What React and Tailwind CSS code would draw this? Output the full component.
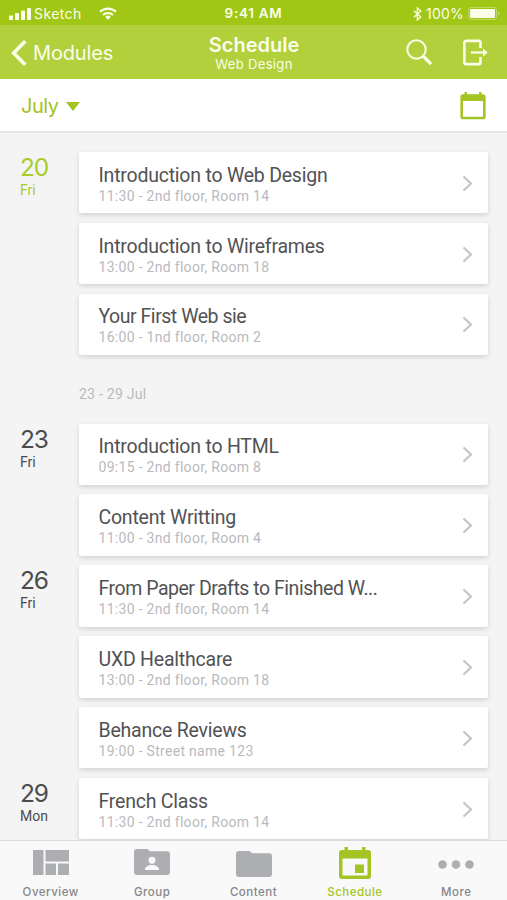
const weeks = [
  {
    label: null,
    days: [
      {
        date: '20',
        weekday: 'Fri',
        active: true,
        events: [
          { title: 'Introduction to Web Design', info: '11:30 - 2nd floor, Room 14' },
          { title: 'Introduction to Wireframes', info: '13:00 - 2nd floor, Room 18' },
          { title: 'Your First Web sie', info: '16:00 - 1nd floor, Room 2', tight: true },
        ],
      },
    ],
  },
  {
    label: '23 - 29 Jul',
    days: [
      {
        date: '23',
        weekday: 'Fri',
        events: [
          { title: 'Introduction to HTML', info: '09:15 - 2nd floor, Room 8' },
          { title: 'Content Writting', info: '11:00 - 3nd floor, Room 4' },
        ],
      },
      {
        date: '26',
        weekday: 'Fri',
        events: [
          { title: 'From Paper Drafts to Finished W...', info: '11:30 - 2nd floor, Room 14', tight: true },
          { title: 'UXD Healthcare', info: '13:00 - 2nd floor, Room 18' },
          { title: 'Behance Reviews', info: '19:00 - Street name 123' },
        ],
      },
      {
        date: '29',
        weekday: 'Mon',
        events: [{ title: 'French Class', info: '11:30 - 2nd floor, Room 14' }],
      },
    ],
  },
]

function StatusBar() {
  return (
    <div className="grid h-[25px] grid-cols-3 items-center bg-[#a1c716] px-[8px] pt-[2px] text-[13.5px] leading-none text-[#fbfde9]">
      <div className="flex items-center">
        <svg width="23" height="12" viewBox="0 0 23 12" fill="currentColor">
          <rect x="1" y="7.5" width="4" height="4.5" rx="0.8" />
          <rect x="7" y="5" width="4" height="7" rx="0.8" />
          <rect x="13" y="2.5" width="4" height="9.5" rx="0.8" />
          <rect x="19" y="0" width="4" height="12" rx="0.8" />
        </svg>
        <span className="ml-[3px] text-[14px] tracking-[0.4px]">Sketch</span>
        <svg className="ml-[17px]" width="18" height="13" viewBox="0 0 18 13" fill="none" stroke="currentColor" strokeWidth="2.2">
          <path d="M1 4.8a11.5 11.5 0 0 1 16 0" />
          <path d="M4 8a7.2 7.2 0 0 1 10 0" />
          <path d="M9 12.8 6.2 9.9a4 4 0 0 1 5.6 0z" fill="currentColor" stroke="none" />
        </svg>
      </div>
      <div className="text-center text-[13.5px] font-semibold tracking-[0.7px]">9:41 AM</div>
      <div className="-mr-[1px] flex items-center justify-end">
        <svg width="9" height="14" viewBox="0 0 9 14" fill="none" stroke="currentColor" strokeWidth="1.3">
          <path d="m.8 3.8 7 6.2-3.5 3V1l3.5 3-7 6.2" />
        </svg>
        <span className="ml-[4px] text-[14px] tracking-[0.2px]">100%</span>
        <svg className="ml-[4px]" width="32" height="13" viewBox="0 0 32 13">
          <rect x="0.5" y="0.5" width="28" height="12" rx="2.5" fill="none" stroke="#c0d95f" />
          <rect x="2" y="2" width="25" height="9" rx="1" fill="currentColor" />
          <path d="M30 4.5c2 .8 2 3.2 0 4z" fill="#c9de78" />
        </svg>
      </div>
    </div>
  )
}

function NavBar() {
  return (
    <div className="grid h-[54px] grid-cols-[1fr_auto_1fr] items-center bg-[#b1d03c] pl-[11px] pr-[10px] text-[#fbfde9]">
      <div className="flex items-center pt-[1px]">
        <svg width="16" height="26" viewBox="0 0 16 26" fill="none" stroke="currentColor" strokeWidth="3.6">
          <path d="M14.3 1.2 2.6 13l11.7 11.8" />
        </svg>
        <span className="ml-[6px] text-[20px] leading-none tracking-[-0.15px]">Modules</span>
      </div>
      <div className="pt-[3px] text-center">
        <div className="text-[20px] font-semibold leading-[22px]">Schedule</div>
        <div className="text-[13px] leading-[17px] tracking-[0.35px]">Web Design</div>
      </div>
      <div className="flex items-center justify-end gap-[30px] pr-[9px]">
        <svg width="27" height="27" viewBox="0 0 27 27" fill="none" stroke="currentColor">
          <circle cx="10.5" cy="10.5" r="9.2" strokeWidth="2" />
          <path d="m17.2 17.2 7.9 7.9" strokeWidth="3.2" />
        </svg>
        <svg width="25" height="27" viewBox="0 0 25 27" fill="none" stroke="currentColor" strokeWidth="2.6">
          <path d="M17.5 9V3.5a1.6 1.6 0 0 0-1.6-1.6H3a1.6 1.6 0 0 0-1.6 1.6v20A1.6 1.6 0 0 0 3 25.1h12.9a1.6 1.6 0 0 0 1.6-1.6V18" />
          <path d="M8 13.5h13" strokeWidth="2.2" />
          <path d="M20 9.4 24.8 13.5 20 17.6z" fill="currentColor" stroke="none" />
        </svg>
      </div>
    </div>
  )
}

function MonthBar() {
  return (
    <div className="flex h-[54px] items-center justify-between border-b-2 border-[#e6e6e6] bg-white px-[21px] text-[#a3c422]">
      <div className="flex items-center pt-[2px]">
        <span className="text-[20px] leading-none tracking-[-0.5px]">July</span>
        <svg className="ml-[8px]" width="14" height="9" viewBox="0 0 14 9" fill="currentColor">
          <path d="M0 0h14L7 9z" />
        </svg>
      </div>
      <svg className="mt-[1px]" width="26" height="28" viewBox="0 0 26 28" fill="currentColor">
        <path
          fillRule="evenodd"
          d="M4.5 0h2.4v2.2h12.2V0h2.4v2.2H23a2.6 2.6 0 0 1 2.6 2.6v19.9a2.6 2.6 0 0 1-2.6 2.6H3a2.6 2.6 0 0 1-2.6-2.6V4.8A2.6 2.6 0 0 1 3 2.2h1.5zM3 9v15.7h20V9z"
        />
      </svg>
    </div>
  )
}

function EventCard({ title, info, tight }) {
  return (
    <div className="flex h-[61.3px] items-center justify-between rounded-[2px] bg-white pl-[19.5px] pr-[15px] shadow-[0_2px_5px_rgba(0,0,0,0.14)]">
      <div className="pt-[3px] font-[Roboto]">
        <div
          className={`whitespace-nowrap text-[19.5px] leading-[23px] text-[#525254] ${tight ? 'tracking-[-0.47px]' : 'tracking-[-0.22px]'}`}
        >
          {title}
        </div>
        <div className="whitespace-nowrap text-[14px] leading-[18px] tracking-[0.3px] text-[#b9babd]">{info}</div>
      </div>
      <svg className="mt-[1px]" width="11" height="17" viewBox="0 0 11 17" fill="none" stroke="#c5c5c7" strokeWidth="2.2">
        <path d="m1.5 1.5 7.5 7-7.5 7" />
      </svg>
    </div>
  )
}

function Day({ date, weekday, active, events }) {
  return (
    <div className="flex">
      <div className={`w-[79px] shrink-0 pl-[20px] pt-[2px] ${active ? 'text-[#a9cc2b]' : 'text-[#4b4b4d]'}`}>
        <div className="text-[24.5px] leading-[27px] tracking-[-1.2px]">{date}</div>
        <div className="font-[Roboto] text-[14px] leading-[18px]">{weekday}</div>
      </div>
      <div className="flex flex-1 flex-col gap-[9.6px]">
        {events.map((event) => (
          <EventCard key={event.title} {...event} />
        ))}
      </div>
    </div>
  )
}

function Tab({ label, active, children }) {
  return (
    <div className={`flex flex-1 flex-col items-center ${active ? 'text-[#a3c422]' : 'text-[#adaeb2]'}`}>
      <div className="flex h-[44px] items-center justify-center">{children}</div>
      <div className={`text-[11.5px] font-medium leading-[15px] tracking-[0.5px] ${active ? '' : 'text-[#858689]'}`}>{label}</div>
    </div>
  )
}

function TabBar() {
  return (
    <div className="flex h-[60px] shrink-0 border-t border-[#d9d9d9] bg-[#f9f9f9]">
      <Tab label="Overview">
        <svg className="-mt-[1px]" width="36" height="25" viewBox="0 0 36 25" fill="currentColor">
          <path d="M0 0h10.5v25H0zM12.500 0H36v11.500H12.500zM12.500 13.500h10.500V25H12.500zM25 13.500h11V25H25z" />
        </svg>
      </Tab>
      <Tab label="Group">
        <svg className="-mt-[2px]" width="36" height="26" viewBox="0 0 36 26" fill="currentColor">
          <path d="M3 0h9.500a3 3 0 0 1 2.200 1L16 2.300h17a3 3 0 0 1 3 3V23a3 3 0 0 1-3 3H3a3 3 0 0 1-3-3V3a3 3 0 0 1 3-3z" />
          <circle cx="18" cy="11.300" r="3.500" fill="#f9f9f9" />
          <path d="M10.800 21c0-3.400 3.400-5 7.200-5s7.200 1.600 7.200 5z" fill="#f9f9f9" />
        </svg>
      </Tab>
      <Tab label="Content">
        <svg className="mt-[2px]" width="36" height="26" viewBox="0 0 36 26" fill="currentColor">
          <path d="M3 0h9.500a3 3 0 0 1 2.200 1L16 2.300h17a3 3 0 0 1 3 3V23a3 3 0 0 1-3 3H3a3 3 0 0 1-3-3V3a3 3 0 0 1 3-3z" />
        </svg>
      </Tab>
      <Tab label="Schedule" active>
        <svg width="32" height="32" viewBox="0 0 32 32" fill="currentColor">
          <path
            fillRule="evenodd"
            d="M5.500 0H9v3h14V0h3.500v3H29a3 3 0 0 1 3 3v23a3 3 0 0 1-3 3H3a3 3 0 0 1-3-3V6a3 3 0 0 1 3-3h2.500zM3.500 11.500v17h25v-17zM16 17.500h9V26h-9z"
          />
        </svg>
      </Tab>
      <Tab label="More">
        <svg className="mt-[2px]" width="36" height="9" viewBox="0 0 36 9" fill="currentColor">
          <circle cx="4.500" cy="4.500" r="4.300" />
          <circle cx="18" cy="4.500" r="4.300" />
          <circle cx="31.500" cy="4.500" r="4.300" />
        </svg>
      </Tab>
    </div>
  )
}

export default function App() {
  return (
    <div className="flex h-[900px] w-full flex-col overflow-hidden bg-[#f4f4f4] font-[Inter,Roboto,sans-serif]">
      <StatusBar />
      <NavBar />
      <MonthBar />
      <main className="min-h-0 flex-1 overflow-hidden pr-[19px] pt-[19px]">
        {weeks.map((week) => (
          <section key={week.days[0].date}>
            {week.label && (
              <div className="flex h-[68.5px] items-center pl-[79px] pt-[11px] font-[Roboto] text-[14px] tracking-[0.25px] text-[#b9babd]">
                {week.label}
              </div>
            )}
            <div className="flex flex-col gap-[9.6px]">
              {week.days.map((day) => (
                <Day key={day.date} {...day} />
              ))}
            </div>
          </section>
        ))}
      </main>
      <TabBar />
    </div>
  )
}
